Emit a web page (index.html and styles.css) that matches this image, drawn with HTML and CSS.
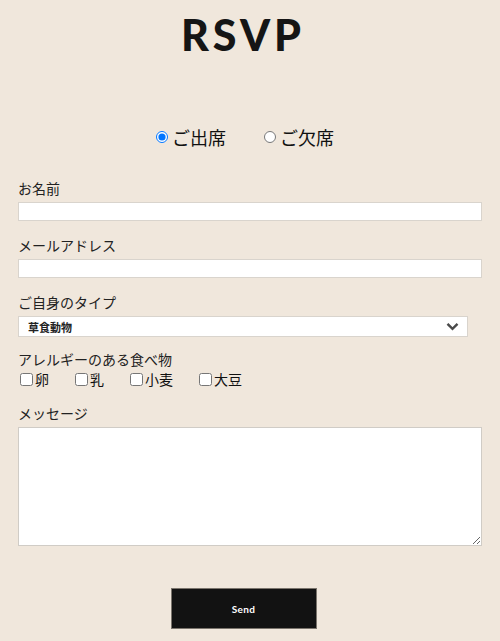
FILE: index.html
```html
<!DOCTYPE html>
<html lang="ja">
<head>
<meta charset="utf-8">
<link rel="stylesheet" href="styles.css">
</head>
<body>
<div class="page">
  <h1 class="title">RSVP</h1>
  <div class="attend">
    <label class="attend-opt"><input type="radio" name="att" checked><span>ご出席</span></label>
    <label class="attend-opt"><input type="radio" name="att"><span>ご欠席</span></label>
  </div>
  <form class="form">
    <div class="field">
      <label class="label">お名前</label>
      <input class="text" type="text">
    </div>
    <div class="field">
      <label class="label">メールアドレス</label>
      <input class="text" type="text">
    </div>
    <div class="field field-select">
      <label class="label">ご自身のタイプ</label>
      <div class="select-wrap">
        <select class="select"><option>草食動物</option></select>
        <svg class="chev" width="13" height="9" viewBox="0 0 13 9"><path d="M1.5 1.8 L6.5 6.8 L11.5 1.8" fill="none" stroke="#4a4a4a" stroke-width="2.4"/></svg>
      </div>
    </div>
    <div class="field field-allergy">
      <label class="label">アレルギーのある食べ物</label>
      <div class="checks">
        <label class="check"><input type="checkbox"><span>卵</span></label>
        <label class="check"><input type="checkbox"><span>乳</span></label>
        <label class="check"><input type="checkbox"><span>小麦</span></label>
        <label class="check"><input type="checkbox"><span>大豆</span></label>
      </div>
    </div>
    <div class="field">
      <label class="label">メッセージ</label>
      <textarea class="area"></textarea>
    </div>
    <div class="submit-row">
      <button class="send" type="button">Send</button>
    </div>
  </form>
</div>
</body>
</html>
```
FILE: styles.css
```css
html, body {
  margin: 0;
  padding: 0;
  background: #f0e7dc;
}
body {
  font-family: "Noto Sans CJK JP", "Liberation Serif", serif;
  color: #222;
}
.page {
  padding: 0 18px;
}
.title {
  margin: 0;
  padding-top: 10px;
  padding-right: 14px;
  text-align: center;
  font-family: "Lato", "DejaVu Sans", sans-serif;
  font-weight: 900;
  font-size: 43px;
  line-height: 50px;
  letter-spacing: 4px;
  color: #151515;
}
.attend {
  display: flex;
  justify-content: center;
  gap: 38px;
  margin-top: 64px;
  padding-right: 10px;
}
.attend-opt {
  display: flex;
  align-items: center;
  font-size: 18px;
  line-height: 26px;
  color: #111;
}
.attend-opt input {
  margin: 0 4px 0 0;
  width: 12px;
  height: 12px;
}
.form {
  margin-top: 28px;
}
.field {
  display: flex;
  flex-direction: column;
  margin-bottom: 14px;
}
.label {
  font-size: 14px;
  line-height: 20px;
  color: #222;
  margin-bottom: 4px;
}
.text {
  box-sizing: border-box;
  width: 100%;
  height: 19px;
  margin: 0;
  border: 1px solid #d9d4cd;
  background: #fff;
  padding: 0 4px;
}
.field-select {
  margin-bottom: 12px;
}
.select-wrap {
  position: relative;
  width: 450px;
}
.select {
  display: block;
  box-sizing: border-box;
  width: 100%;
  height: 21px;
  margin: 0;
  appearance: none;
  -webkit-appearance: none;
  border: 1px solid #d9d4cd;
  border-radius: 0;
  background: #fff;
  padding: 0 9px;
  font-family: "Noto Sans CJK JP", sans-serif;
  font-size: 11px;
  font-weight: 700;
  color: #222;
}
.chev {
  position: absolute;
  right: 9px;
  top: 6px;
}
.field-allergy .label {
  margin-bottom: 0;
}
.checks {
  display: flex;
  gap: 26px;
  padding-left: 2px;
}
.check {
  display: flex;
  align-items: center;
  font-size: 14px;
  line-height: 20px;
  color: #111;
}
.check input {
  margin: 0 2px 0 0;
  width: 13px;
  height: 13px;
}
.area {
  display: block;
  box-sizing: border-box;
  width: 100%;
  height: 119px;
  margin: 0;
  border: 1px solid #d0ccc6;
  background: #fff;
  resize: vertical;
}
.submit-row {
  display: flex;
  justify-content: center;
  padding-right: 13px;
  margin-top: 42px;
}
.send {
  width: 146px;
  height: 41px;
  background: #121212;
  border: 1px solid #7a746c;
  color: #fff;
  font-family: "Lato", "DejaVu Sans", sans-serif;
  font-weight: 700;
  font-size: 10px;
  letter-spacing: 0.3px;
}
```
